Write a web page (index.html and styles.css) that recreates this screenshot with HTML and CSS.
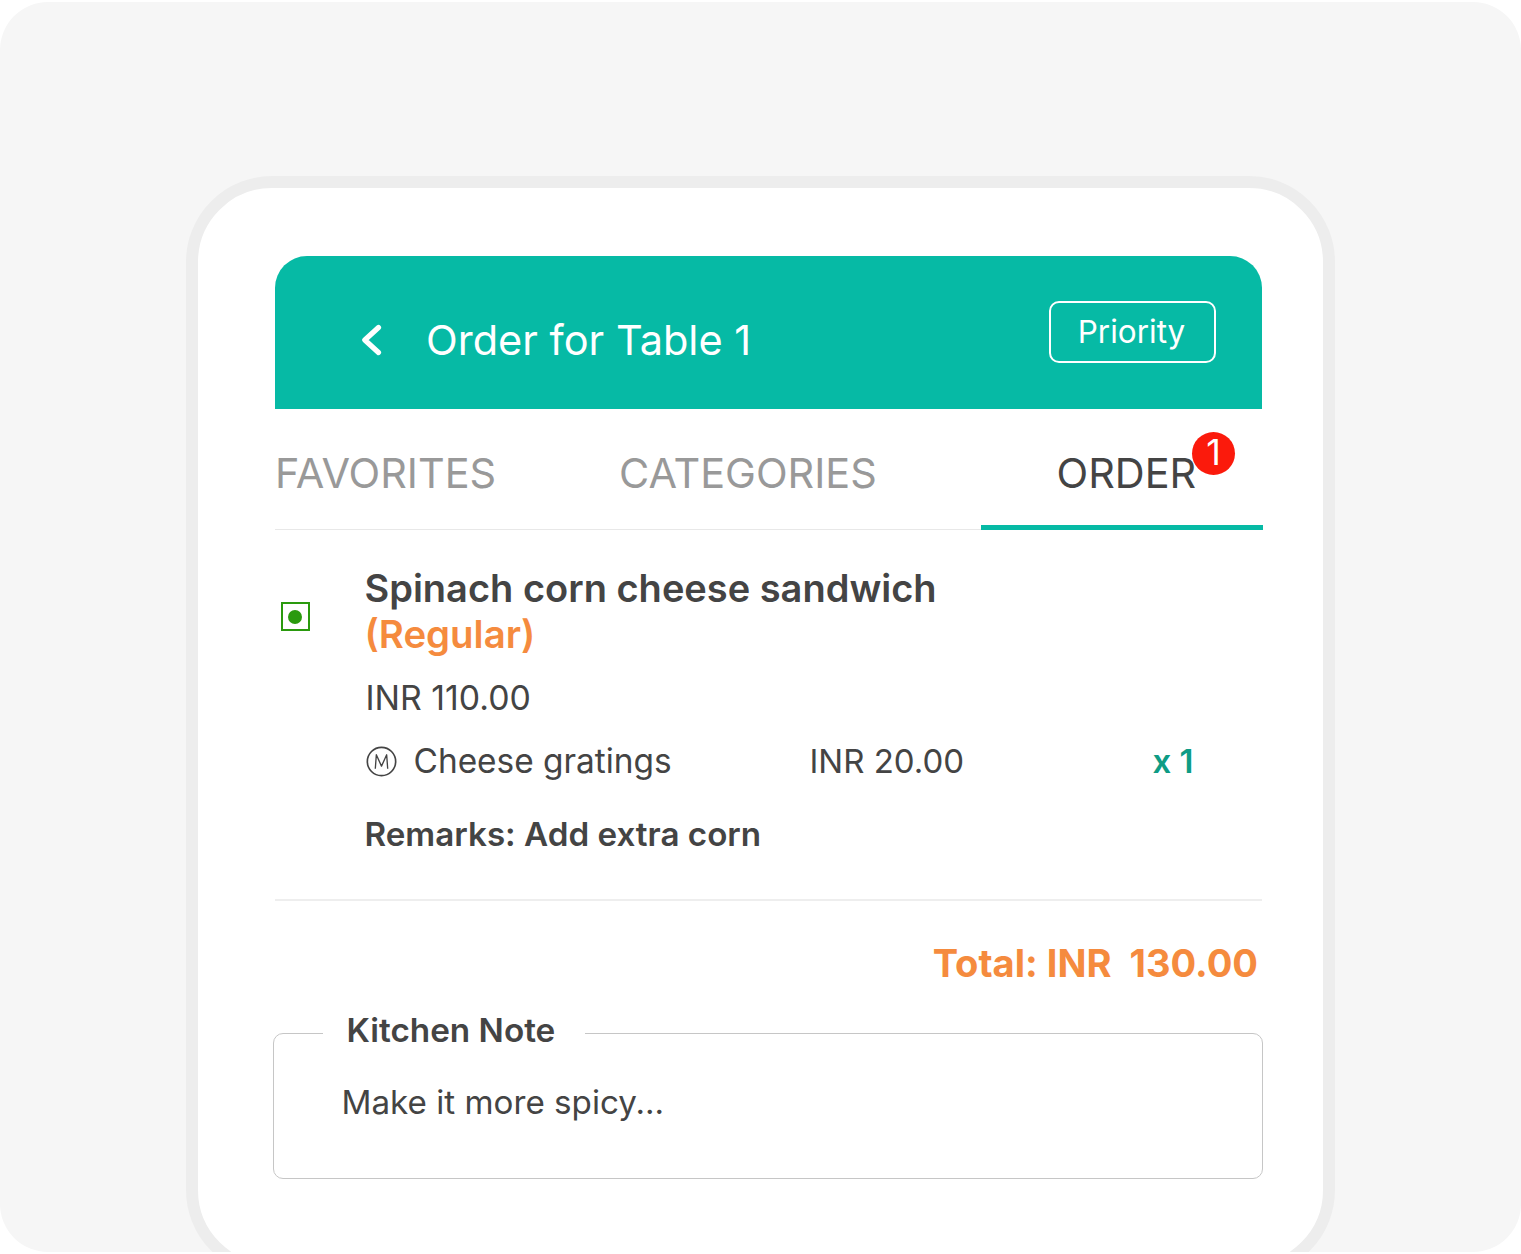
FILE: index.html
```html
<!DOCTYPE html>
<html lang="en">
<head>
<meta charset="utf-8">
<title>Order for Table 1</title>
<link rel="stylesheet" href="styles.css">
</head>
<body>
<main class="canvas">
  <section class="phone">
    <header class="header">
      <div class="header-left">
        <svg class="back" viewBox="0 0 24 34" width="24" height="34" aria-hidden="true"><path d="M18.5 4.5 L4.8 17 L18.5 29.5" fill="none" stroke="#fff" stroke-width="5.2" stroke-linecap="round" stroke-linejoin="round"/></svg>
        <h1 class="title">Order for Table 1</h1>
      </div>
      <button class="priority">Priority</button>
    </header>
    <nav class="tabs">
      <span class="tab tab-fav">FAVORITES</span>
      <span class="tab tab-cat">CATEGORIES</span>
      <span class="tab tab-order"><span class="order-label">ORDER<span class="badge">1</span></span></span>
    </nav>
    <article class="item">
      <div class="veg"><span class="veg-dot"></span></div>
      <div class="item-body">
        <h2 class="item-name">Spinach corn cheese sandwich<br><span class="variant">(Regular)</span></h2>
        <p class="price">INR 110.00</p>
        <div class="addon">
          <span class="addon-name">
            <svg class="m-icon" viewBox="0 0 30 30" width="30" height="30" aria-hidden="true"><circle cx="15" cy="15" r="13.7" fill="none" stroke="#444" stroke-width="1.6"/><path d="M9 22 L10 8.5 L15 19.5 L20 8.5 L21 22" fill="none" stroke="#444" stroke-width="1.3" stroke-linejoin="round"/></svg>
            Cheese gratings
          </span>
          <span class="addon-price">INR 20.00</span>
          <span class="addon-qty">x 1</span>
        </div>
        <p class="remarks">Remarks: Add extra corn</p>
      </div>
    </article>
    <p class="total">Total: INR&nbsp; 130.00</p>
    <fieldset class="note">
      <legend class="note-label">Kitchen Note</legend>
      <p class="note-text">Make it more spicy...</p>
    </fieldset>
  </section>
</main>
</body>
</html>
```
FILE: styles.css
```css
* { box-sizing: border-box; }
html, body { margin: 0; padding: 0; background: #fff; }
body { font-family: Inter, "Liberation Sans", sans-serif; color: #444; height: 1254px; overflow: hidden; }
.canvas {
  margin-top: 2px;
  height: 1250px;
  background: #f6f6f6;
  border-radius: 48px;
  padding: 174px 186px 0;
  overflow: hidden;
}
.phone {
  height: 1100px;
  background: #fff;
  border: 12px solid #ededed;
  border-radius: 86px;
  padding: 68px 61px 0 76.5px;
}
.header {
  height: 153px;
  background: #06baa5;
  border-radius: 32px 32px 0 0;
  display: flex;
  justify-content: space-between;
  align-items: flex-start;
  padding: 44px 46px 0 85.5px;
  color: #fff;
}
.header-left { display: flex; align-items: center; gap: 42px; margin-top: 16px; }
.back { width: 24px; height: 34px; }
.title { margin: 0; font-size: 41.5px; font-weight: 400; line-height: 48px; white-space: nowrap; }
.priority {
  width: 167px;
  height: 62px;
  margin-top: 1px;
  background: transparent;
  border: 2px solid #fff;
  border-radius: 10px;
  color: #fff;
  font: 400 31.5px/1 Inter, "Liberation Sans", sans-serif;
  padding: 0 2px 0 0;
}
.tabs {
  position: relative;
  height: 121px;
  display: flex;
  border-bottom: 1px solid #e8e8e8;
  font-size: 41.4px;
}
.tab { flex: none; line-height: 48px; padding-top: 40px; white-space: nowrap; color: #999; }
.tab-fav { padding-left: 0.5px; width: 344.5px; }
.tab-cat { width: 362px; }
.tab-order {
  width: 282px;
  height: 121px;
  border-bottom: 5px solid #06baa5;
  color: #444;
  padding-left: 75.5px;
}
.order-label { position: relative; display: inline-block; }
.badge {
  position: absolute;
  left: 135.5px;
  top: -17px;
  width: 43px;
  height: 43px;
  border-radius: 50%;
  background: #fb1a0c;
  color: #fff;
  font-size: 36px;
  line-height: 41px;
  text-align: center;
}
.item {
  display: flex;
  height: 371px;
  padding-top: 36px;
  border-bottom: 2px solid #eeeeee;
}
.veg {
  width: 29px;
  height: 29px;
  margin: 36px 0 0 6px;
  border: 2px solid #2a9a0e;
  display: flex;
  align-items: center;
  justify-content: center;
}
.veg-dot { width: 14px; height: 14px; border-radius: 50%; background: #2a9a0e; }
.item-body { margin-left: 55px; flex: 1; }
.item-name { margin: 0; font-size: 38px; font-weight: 600; line-height: 45.5px; }
.variant { color: #f58b3e; font-size: 38.4px; }
.price { margin: 21px 0 0 1px; font-size: 33.8px; line-height: 40px; }
.addon { display: flex; align-items: center; margin: 23px 0 0 1px; font-size: 33px; line-height: 40px; }
.addon-name { width: 444px; display: flex; align-items: center; gap: 17px; white-space: nowrap; font-size: 33.4px; }
.addon-price { width: 343px; }
.addon-qty { color: #0e9c85; font-weight: 600; }
.m-icon { flex: none; width: 31px; height: 31px; }
.remarks { margin: 33px 0 0; font-size: 33.2px; font-weight: 600; line-height: 40px; }
.total {
  margin: 39px 4px 0 0;
  text-align: right;
  color: #f58b3e;
  font-size: 38.1px;
  font-weight: 700;
  line-height: 46px;
}
.note {
  margin: 24px 0 0 -1.5px;
  width: 990px;
  height: 169px;
  border: 1px solid #c6c6c6;
  border-radius: 10px;
  padding: 0 0 0 67.5px;
}
.note-label { margin-left: -19px; padding: 0 30px 6px 24px; font-size: 33.3px; font-weight: 600; line-height: 40px; }
.note-text { margin: 26px 0 0; font-size: 33.2px; line-height: 40px; }
```
